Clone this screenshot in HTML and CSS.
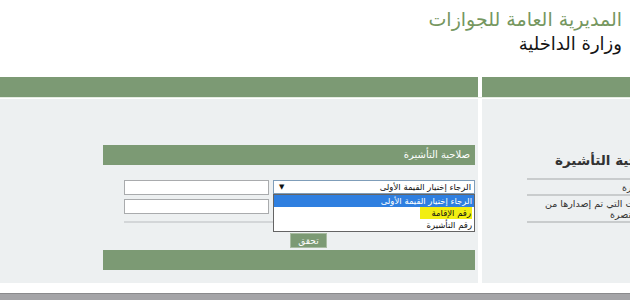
FILE: index.html
```html
<!DOCTYPE html>
<html lang="ar">
<head>
<meta charset="utf-8">
<title>المديرية العامة للجوازات</title>
<link rel="stylesheet" href="styles.css">
</head>
<body>
<header class="top">
  <div class="brand" dir="rtl">
    <div class="t1">المديرية العامة للجوازات</div>
    <div class="t2">وزارة الداخلية</div>
  </div>
</header>
<nav class="nav">
  <div class="nav-l"></div>
  <div class="nav-r"></div>
</nav>
<main class="cols">
  <section class="col-l">
    <div class="box">
      <div class="box-head" dir="rtl">صلاحية التأشيرة</div>
      <div class="box-body">
        <div class="inputs">
          <div class="inp"></div>
          <div class="inp"></div>
        </div>
        <div class="sel-wrap">
          <div class="sel" dir="rtl"><span class="sel-text">الرجاء إختيار القيمة الأولى</span><span class="arrow">▼</span></div>
          <ul class="list" dir="rtl">
            <li class="opt on">الرجاء إختيار القيمة الأولى</li>
            <li class="opt"><span class="hl">رقم الإقامة</span></li>
            <li class="opt">رقم التأشيرة</li>
          </ul>
        </div>
      </div>
      <div class="btn-row"><span class="btn">تحقق</span></div>
      <div class="box-foot"></div>
    </div>
  </section>
  <section class="col-r">
    <div class="info" dir="rtl">
      <div class="info-head">صلاحية التأشيرة</div>
      <div class="info-row"><span class="ln ln-a">رقم التأشيرة</span></div>
      <div class="info-row"><span class="ln ln-b">التأشيرات التي تم إصدارها من</span><span class="ln ln-c">السفارة المختصرة</span></div>
    </div>
  </section>
</main>
<footer class="foot"></footer>
</body>
</html>
```
FILE: styles.css
```css
html, body {
  margin: 0;
  padding: 0;
}
body {
  width: 630px;
  height: 300px;
  overflow: hidden;
  background: #fff;
  font-family: "DejaVu Sans", sans-serif;
}
.top {
  height: 77px;
  box-sizing: border-box;
  padding: 6px 8px 0 0;
  display: flex;
  justify-content: flex-end;
}
.brand {
  text-align: right;
}
.t1 {
  font-size: 19px;
  line-height: 26px;
  color: #76975f;
}
.t2 {
  font-size: 18px;
  line-height: 24px;
  color: #141414;
}
.nav {
  display: flex;
  gap: 4px;
  height: 20px;
  border-bottom: 1px solid #e4ebe2;
  margin-bottom: 1px;
}
.nav-l {
  width: 478px;
  background: #7c9a74;
}
.nav-r {
  flex: 1;
  background: #7c9a74;
}
.cols {
  display: flex;
  gap: 4px;
  height: 184px;
}
.col-l {
  width: 478px;
  background: #edf0f1;
  box-sizing: border-box;
  padding: 46px 3px 0 103px;
}
.col-r {
  flex: 1;
  background: #edf0f1;
  padding: 54px 0 0 45px;
  min-width: 0;
  overflow: hidden;
}
.box {
  width: 372px;
}
.box-head {
  height: 20px;
  line-height: 20px;
  background: #7c9a74;
  color: #fff;
  font-size: 10px;
  padding-right: 5px;
  text-align: right;
}
.box-body {
  display: flex;
  padding: 15px 0 0 21px;
}
.inputs {
  width: 149px;
  display: flex;
  flex-direction: column;
  gap: 4px;
  padding-bottom: 7px;
  border-bottom: 2px solid #d3d6d8;
}
.inp {
  width: 145px;
  height: 15px;
  box-sizing: border-box;
  background: #fff;
  border: 1px solid #a9abad;
}
.sel-wrap {
  position: relative;
  width: 202px;
}
.sel {
  height: 14px;
  box-sizing: border-box;
  background: #fff;
  border: 1px solid #7f9db9;
  display: flex;
  align-items: center;
  justify-content: space-between;
  padding: 0 3px 0 5px;
  font-size: 8.5px;
  color: #111;
}
.arrow {
  font-size: 7px;
  color: #111;
}
.list {
  position: absolute;
  top: 14px;
  left: 0;
  width: 202px;
  height: 38px;
  box-sizing: border-box;
  margin: 0;
  padding: 0;
  list-style: none;
  background: #fff;
  border: 1px solid #646464;
  font-size: 8.5px;
  color: #111;
}
.opt {
  height: 12px;
  line-height: 12px;
  padding-right: 2px;
  text-align: right;
}
.opt.on {
  background: #2f7fe0;
  color: #fff;
}
.hl {
  display: inline-block;
  background: #f2ee12;
  padding: 0 1px 0 12px;
}
.btn-row {
  padding: 10px 0 0 187px;
  height: 15px;
}
.btn {
  display: block;
  width: 37px;
  height: 15px;
  line-height: 14px;
  box-sizing: border-box;
  background: #7c9a74;
  border: 1px solid #a9bca2;
  color: #fff;
  font-size: 9px;
  text-align: center;
}
.box-foot {
  margin-top: 2px;
  height: 20px;
  background: #7c9a74;
}
.info {
  width: 200px;
  font-size: 9.5px;
  color: #333;
}
.info-head {
  font-size: 13.5px;
  font-weight: bold;
  color: #333;
  height: 25px;
  line-height: 14px;
  text-align: left;
  padding-left: 28px;
  white-space: nowrap;
}
.info-row {
  border-top: 2px solid #c9cccd;
  padding: 2px 0 1px;
}
.info-row:last-child {
  border-bottom: 2px solid #c9cccd;
}
.ln {
  display: block;
  line-height: 11px;
  text-align: left;
  white-space: nowrap;
}
.ln-a {
  padding-left: 95px;
}
.ln-b {
  padding-left: 18px;
}
.ln-c {
  padding-left: 83px;
}
.foot {
  margin-top: 10px;
  height: 10px;
  background: #a4a4a7;
  border-top: 1px solid #8a8a8c;
}
```
